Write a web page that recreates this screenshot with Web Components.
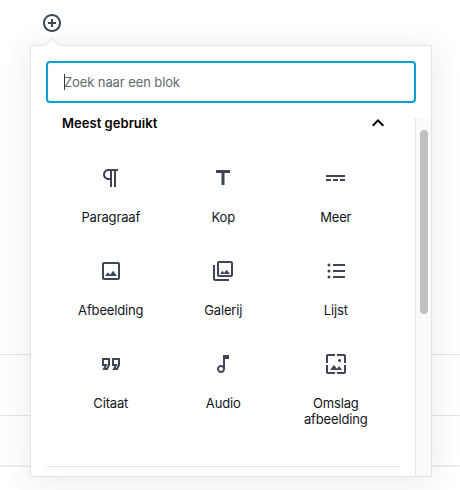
<!DOCTYPE html>
<html lang="nl">
<head>
<meta charset="utf-8">
<title>Blok toevoegen</title>
<style>
  body {
    margin: 0;
    background: #fff;
    color: #11161b;
    font-family: Inter, "Liberation Sans", sans-serif;
    font-size: 13px;
    overflow: hidden;
  }
</style>
</head>
<body>
<editor-canvas>
  <block-inserter>
    <search-field slot="search" placeholder="Zoek naar een blok"></search-field>
    <block-category slot="results" label="Meest gebruikt">
      <block-item icon="paragraph">Paragraaf</block-item>
      <block-item icon="heading">Kop</block-item>
      <block-item icon="more">Meer</block-item>
      <block-item icon="image">Afbeelding</block-item>
      <block-item icon="gallery">Galerij</block-item>
      <block-item icon="list">Lijst</block-item>
      <block-item icon="quote">Citaat</block-item>
      <block-item icon="audio">Audio</block-item>
      <block-item icon="cover">Omslag afbeelding</block-item>
    </block-category>
  </block-inserter>
</editor-canvas>

<script>
const ICONS = {
  paragraph: 'M11 5v7H9.5C7.6 12 6 10.4 6 8.5S7.6 5 9.5 5H11m8-2H9.5C6.5 3 4 5.5 4 8.5S6.5 14 9.5 14H11v7h2V5h2v16h2V5h2V3z',
  heading: 'M5 4v3h5.5v12h3V7H19V4z',
  more: 'M2 9v2h19V9H2zm0 6h5v-2H2v2zm7 0h5v-2H9v2zm7 0h5v-2h-5v2z',
  image: 'M19 5v14H5V5h14m0-2H5c-1.1 0-2 .9-2 2v14c0 1.1.9 2 2 2h14c1.1 0 2-.9 2-2V5c0-1.1-.9-2-2-2zm-4.86 8.86l-3 3.87L9 13.14 6 17h12l-3.86-5.14z',
  gallery: 'M20 4v12H8V4h12m0-2H8c-1.1 0-2 .9-2 2v12c0 1.1.9 2 2 2h12c1.1 0 2-.9 2-2V4c0-1.1-.9-2-2-2zm-8.5 9.67l1.69 2.26 2.48-3.1L19 15H9zM2 6v14c0 1.1.9 2 2 2h14v-2H4V6H2z',
  list: 'M9 19h12v-2H9v2zm0-6h12v-2H9v2zm0-8v2h12V5H9zM5 4.500a1.5 1.5 0 1 0 0 3 1.5 1.5 0 0 0 0-3zm0 6a1.5 1.5 0 1 0 0 3 1.5 1.5 0 0 0 0-3zm0 6a1.5 1.5 0 1 0 0 3 1.5 1.5 0 0 0 0-3z',
  quote: 'M18.62 18h-5.24l2-4H13V6h8v7.24L18.62 18zm-2-2h.76L19 12.76V8h-4v4h3.62l-2 4zm-8 2H3.38l2-4H3V6h8v7.24L8.62 18zm-2-2h.76L9 12.76V8H5v4h3.62l-2 4z',
  audio: 'M12 3l.01 10.55c-.59-.34-1.27-.55-2-.55C7.79 13 6 14.79 6 17s1.79 4 4.01 4S14 19.21 14 17V7h4V3h-6zm-1.99 16c-1.1 0-2-.9-2-2s.9-2 2-2 2 .9 2 2-.9 2-2 2z',
  cover: 'M4 4h7V2H4c-1.1 0-2 .9-2 2v7h2V4zm6 9l-4 5h12l-3-4-2.03 2.71L10 13zm7-4.5c0-.83-.67-1.5-1.5-1.5S14 7.67 14 8.5s.67 1.5 1.5 1.5S17 9.33 17 8.5zM20 2h-7v2h7v7h2V4c0-1.1-.9-2-2-2zm0 18h-7v2h7c1.1 0 2-.9 2-2v-7h-2v7zM4 13H2v7c0 1.1.9 2 2 2h7v-2H4v-7z'
};

class EditorCanvas extends HTMLElement {
  constructor() {
    super();
    this.attachShadow({ mode: 'open' });
    this.shadowRoot.innerHTML = `
      <style>
        :host {
          display: block;
          position: relative;
          height: 490px;
          overflow: hidden;
        }
        .rows {
          display: grid;
          grid-template-rows: 355px 61px 51px;
        }
        .row { border-bottom: 1px solid #e2e4e7; }
        .row:last-child { border-bottom: 2px solid #eceef0; }
        .popover {
          position: absolute;
          top: 13px;
          left: 30px;
        }
      </style>
      <div class="rows">
        <div class="row"></div>
        <div class="row"></div>
        <div class="row"></div>
      </div>
      <div class="popover"><slot></slot></div>
    `;
  }
}

class BlockInserter extends HTMLElement {
  constructor() {
    super();
    this.attachShadow({ mode: 'open' });
    this.shadowRoot.innerHTML = `
      <style>
        :host { display: block; width: 402px; }
        .toggle {
          display: block;
          width: 20px;
          height: 20px;
          margin: 0 0 12px 12px;
          padding: 0;
          border: 0;
          background: none;
          color: #3c4654;
        }
        .toggle svg { display: block; fill: currentColor; }
        .panel {
          position: relative;
          box-sizing: border-box;
          display: flex;
          flex-direction: column;
          height: 432px;
          border: 1px solid #e2e4e7;
          background: #fff;
          box-shadow: 0 3px 30px rgba(25, 30, 35, .1);
        }
        .arrow {
          position: absolute;
          top: -8px;
          left: 13px;
        }
        .search { padding: 15px 15px 0; }
        .body {
          display: flex;
          flex: 1;
          margin-top: 15px;
          min-height: 0;
        }
        .results { flex: 1; overflow: hidden; }
        .scrollbar {
          box-sizing: border-box;
          width: 16px;
          padding: 12px 3px 0 4px;
          border-left: 1px solid #e8e8e8;
          background: #fafafa;
        }
        .thumb {
          height: 184px;
          border-radius: 4px;
          background: #c1c1c1;
        }
      </style>
      <button class="toggle" aria-label="Blok toevoegen">
        <svg width="20" height="20" viewBox="0 0 20 20"><path d="M10 1c-5 0-9 4-9 9s4 9 9 9 9-4 9-9-4-9-9-9zm0 16c-3.9 0-7-3.1-7-7s3.1-7 7-7 7 3.1 7 7-3.1 7-7 7zm1-11H9v3H6v2h3v3h2v-3h3V9h-3V6z"/></svg>
      </button>
      <div class="panel">
        <svg class="arrow" width="16" height="9" viewBox="0 0 16 9"><path d="M0 9V8L8 .7 16 8v1z" fill="#fff"/><path d="M.3 7.7L8 .7l7.7 7" fill="none" stroke="#dcdee1"/></svg>
        <div class="search"><slot name="search"></slot></div>
        <div class="body">
          <div class="results"><slot name="results"></slot></div>
          <div class="scrollbar"><div class="thumb"></div></div>
        </div>
      </div>
    `;
  }
}

class SearchField extends HTMLElement {
  constructor() {
    super();
    this.attachShadow({ mode: 'open' });
  }

  connectedCallback() {
    this.shadowRoot.innerHTML = `
      <style>
        :host {
          box-sizing: border-box;
          display: flex;
          align-items: center;
          height: 42px;
          padding-left: 16px;
          border: 2px solid #00a0d2;
          border-radius: 4px;
          background: #fff;
          color: #636a72;
          letter-spacing: -.1px;
        }
        .caret {
          width: 1px;
          height: 16px;
          margin-right: -1px;
          background: #32373c;
        }
      </style>
      <span class="caret"></span>
      <span>${this.getAttribute('placeholder')}</span>
    `;
  }
}

class BlockCategory extends HTMLElement {
  constructor() {
    super();
    this.attachShadow({ mode: 'open' });
  }

  connectedCallback() {
    this.shadowRoot.innerHTML = `
      <style>
        :host { display: block; }
        .title {
          display: flex;
          align-items: center;
          justify-content: space-between;
          height: 24px;
          margin-top: -7px;
          padding: 0 25px 0 31px;
          color: #000;
          font-weight: 600;
          letter-spacing: .04px;
        }
        .grid {
          display: grid;
          grid-template-columns: repeat(3, 112.5px);
          grid-auto-rows: 93px;
          margin: 31px 0 0 23.5px;
        }
        .divider {
          height: 1px;
          margin: 21px 15px 0 16px;
          background: #e2e4e7;
        }
      </style>
      <div class="title">
        <span>${this.getAttribute('label')}</span>
        <svg width="24" height="24" viewBox="0 0 24 24"><path d="M12 8l-6 6 1.41 1.41L12 10.83l4.59 4.58L18 14z"/></svg>
      </div>
      <div class="grid"><slot></slot></div>
      <div class="divider"></div>
    `;
  }
}

class BlockItem extends HTMLElement {
  constructor() {
    super();
    this.attachShadow({ mode: 'open' });
  }

  connectedCallback() {
    this.shadowRoot.innerHTML = `
      <style>
        :host {
          display: flex;
          flex-direction: column;
          align-items: center;
          line-height: 16px;
          text-align: center;
          letter-spacing: -.15px;
        }
        svg { fill: #3c4654; }
        .label { width: 80px; margin-top: 19px; }
      </style>
      <svg width="24" height="24" viewBox="0 0 24 24"><path d="${ICONS[this.getAttribute('icon')]}"/></svg>
      <span class="label"><slot></slot></span>
    `;
  }
}

customElements.define('editor-canvas', EditorCanvas);
customElements.define('block-inserter', BlockInserter);
customElements.define('search-field', SearchField);
customElements.define('block-category', BlockCategory);
customElements.define('block-item', BlockItem);
</script>
</body>
</html>
